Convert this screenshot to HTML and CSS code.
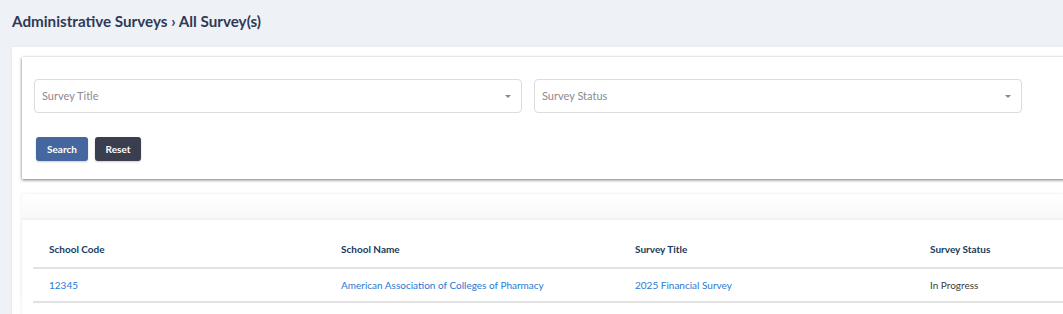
FILE: index.html
```html
<!DOCTYPE html>
<html lang="en">
<head>
<meta charset="utf-8">
<title>All Survey(s)</title>
<link rel="stylesheet" href="styles.css">
</head>
<body>
<div class="page">
  <h1 class="crumb">Administrative Surveys <span class="sep">›</span> All Survey(s)</h1>
  <div class="panel">
    <div class="card filters">
      <div class="selects">
        <div class="select"><span class="ph">Survey Title</span><span class="caret"></span></div>
        <div class="select"><span class="ph">Survey Status</span><span class="caret"></span></div>
      </div>
      <div class="actions">
        <button class="btn btn-primary">Search</button>
        <button class="btn btn-dark">Reset</button>
      </div>
    </div>
    <div class="card results">
      <div class="results-top"></div>
      <div class="table-wrap">
        <table class="grid">
          <colgroup>
            <col class="c1"><col class="c2"><col class="c3"><col class="c4">
          </colgroup>
          <thead>
            <tr><th>School Code</th><th>School Name</th><th>Survey Title</th><th>Survey Status</th></tr>
          </thead>
          <tbody>
            <tr>
              <td><a href="#">12345</a></td>
              <td><a href="#">American Association of Colleges of Pharmacy</a></td>
              <td><a href="#">2025 Financial Survey</a></td>
              <td class="status">In Progress</td>
            </tr>
          </tbody>
        </table>
      </div>
    </div>
  </div>
</div>
</body>
</html>
```
FILE: styles.css
```css
html, body {
  margin: 0;
  padding: 0;
  background: #eef1f6;
  overflow: hidden;
  font-family: Lato, "Noto Sans", sans-serif;
}
.page {
  padding: 0 0 0 12px;
  width: 1200px;
}
.crumb {
  margin: 0;
  padding-top: 11px;
  height: 36px;
  box-sizing: border-box;
  font-size: 15.2px;
  font-weight: 700;
  color: #2e3a55;
  line-height: 20px;
}
.crumb .sep { font-weight: 700; }
.panel {
  margin-top: 11px;
  background: #fff;
  padding: 10px 0 0 10px;
  height: 280px;
  box-shadow: 0 0 4px rgba(0,0,0,0.06);
}
.card {
  background: #fff;
}
.filters {
  height: 122px;
  box-sizing: border-box;
  padding: 22px 0 0 12px;
  box-shadow: 0 1px 3px rgba(0,0,0,0.55);
}
.selects {
  display: flex;
  gap: 12px;
}
.select {
  width: 488px;
  height: 34px;
  box-sizing: border-box;
  border: 1px solid #dcdcdc;
  border-radius: 4px;
  display: flex;
  align-items: center;
  justify-content: space-between;
  padding: 0 10px 0 7px;
}
.ph {
  font-size: 11px;
  color: #8a8a8f;
  margin-top: -2px;
}
.caret {
  width: 0;
  height: 0;
  border-left: 3.5px solid transparent;
  border-right: 3.5px solid transparent;
  border-top: 3.5px solid #888;
}
.actions {
  display: flex;
  gap: 7px;
  margin-top: 24px;
  padding-left: 2px;
}
.btn {
  height: 24px;
  border: 0;
  border-radius: 3px;
  color: #fff;
  font-family: inherit;
  font-size: 10px;
  font-weight: 700;
  padding: 0;
  box-shadow: 0 1px 2px rgba(0,0,0,0.2);
}
.btn-primary { background: #4467a0; width: 52px; }
.btn-dark { background: #3a3e4f; width: 46px; }
.results {
  margin-top: 15px;
  height: 140px;
  box-shadow: 0 0 4px rgba(0,0,0,0.08);
}
.results-top {
  height: 26px;
  background: linear-gradient(#fff, #f8f8f8);
}
.table-wrap {
  background: #fff;
  padding-left: 11px;
  box-shadow: 0 -1px 3px rgba(0,0,0,0.06);
}
.grid {
  border-collapse: collapse;
  table-layout: fixed;
  width: 1160px;
}
.c1 { width: 292px; }
.c2 { width: 294px; }
.c3 { width: 295px; }
.grid th, .grid td {
  text-align: left;
  padding: 0 16px;
  font-size: 10px;
}
.grid th {
  height: 48px;
  padding-top: 10px;
  box-sizing: border-box;
  color: #173b5a;
  font-weight: 700;
  border-bottom: 2px solid #e2e2e2;
}
.grid td {
  height: 32px;
  border-bottom: 2px solid #e2e2e2;
}
.grid a {
  color: #2a78d3;
  text-decoration: none;
}
.status { color: #3e3a38; }
```
